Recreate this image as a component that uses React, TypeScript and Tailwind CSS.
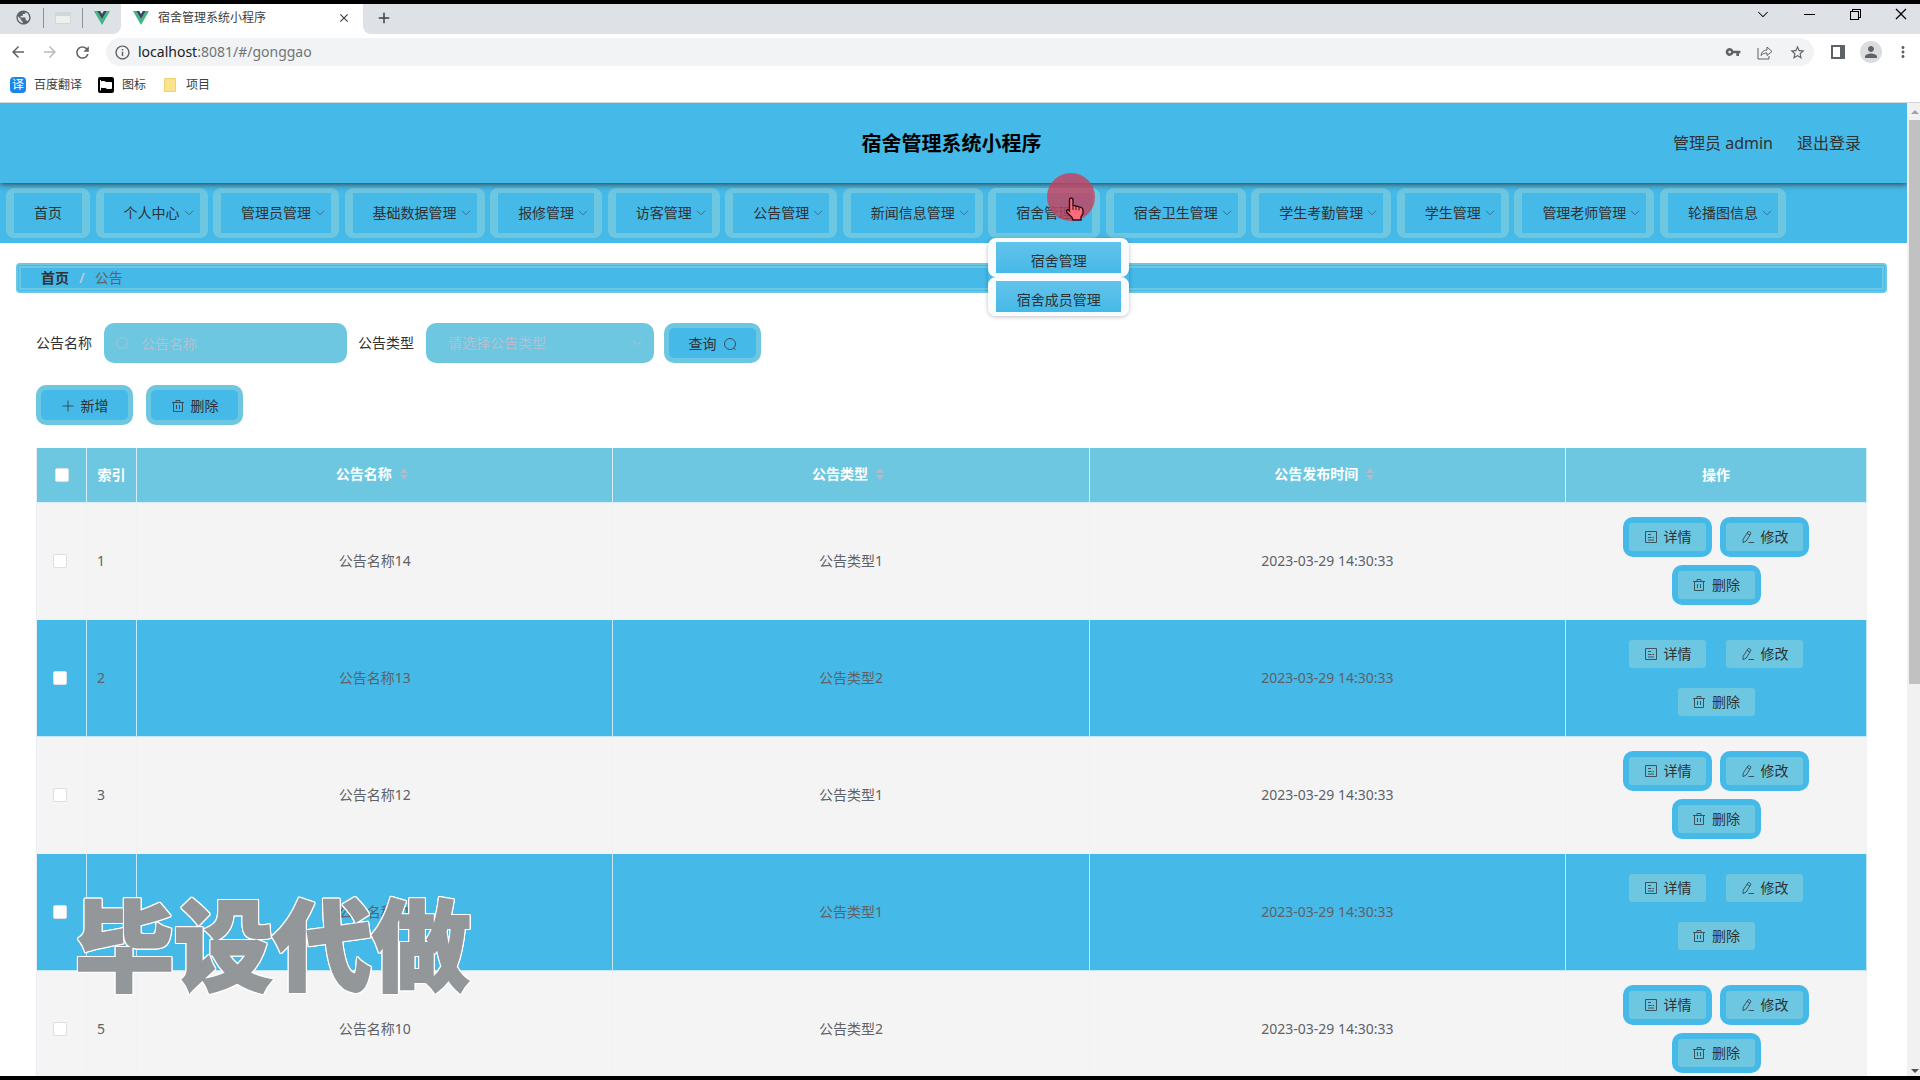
import type { ReactNode } from "react";
import {
  MdAdd,
  MdArrowBack,
  MdArrowForward,
  MdClose,
  MdInfoOutline,
  MdMoreVert,
  MdPerson,
  MdPublic,
  MdRefresh,
  MdStarBorder,
  MdVpnKey,
} from "react-icons/md";
import {
  VscChevronDown,
  VscChromeClose,
  VscChromeMinimize,
  VscChromeRestore,
} from "react-icons/vsc";

const menus = [
  "个人中心",
  "管理员管理",
  "基础数据管理",
  "报修管理",
  "访客管理",
  "公告管理",
  "新闻信息管理",
  "宿舍管理",
  "宿舍卫生管理",
  "学生考勤管理",
  "学生管理",
  "管理老师管理",
  "轮播图信息",
];

const openMenu = "宿舍管理";
const subMenus = ["宿舍管理", "宿舍成员管理"];

const rows = [
  { id: 1, name: "公告名称14", type: "公告类型1", time: "2023-03-29 14:30:33" },
  { id: 2, name: "公告名称13", type: "公告类型2", time: "2023-03-29 14:30:33" },
  { id: 3, name: "公告名称12", type: "公告类型1", time: "2023-03-29 14:30:33" },
  { id: 4, name: "公告名称11", type: "公告类型1", time: "2023-03-29 14:30:33" },
  { id: 5, name: "公告名称10", type: "公告类型2", time: "2023-03-29 14:30:33" },
];

/* ---------- icons ---------- */

function VueLogo() {
  return (
    <svg width="16" height="14" viewBox="0 0 16 14">
      <path d="M0 0h3.2L8 8.3 12.8 0H16L8 14z" fill="#41b883" />
      <path d="M3.2 0h3L8 3.1 9.8 0h3L8 8.3z" fill="#35495e" />
    </svg>
  );
}

function Svg({ children }: { children: ReactNode }) {
  return (
    <svg
      width="14"
      height="14"
      viewBox="0 0 14 14"
      fill="none"
      stroke="currentColor"
      strokeWidth="0.9"
      className="shrink-0 opacity-85"
    >
      {children}
    </svg>
  );
}

const SearchIcon = () => (
  <Svg>
    <circle cx="7" cy="7" r="5.5" />
    <path d="M10.8 11l1.7 1.8" />
  </Svg>
);

const PlusIcon = () => (
  <Svg>
    <path d="M7 1.5v11M1.5 7h11" />
  </Svg>
);

const TrashIcon = () => (
  <Svg>
    <path d="M1 3.5h12M2.5 3.5v9h9v-9M5 3.5v-2h4v2M5.5 6v4M8.5 6v4" />
  </Svg>
);

const DocIcon = () => (
  <Svg>
    <path d="M1.5 1.5h11v11h-11zM4 4.5h3M4 7.5h3.5M8.5 7.5h1.5M4 10h6" />
  </Svg>
);

const EditIcon = () => (
  <Svg>
    <path d="M2.2 9.2L7 1.8c.6-.8 3.4.6 2.8 1.8L5.2 11 2 12.6zM6 3.4l3 1.7M7.5 12.5H13" />
  </Svg>
);

const ArrowDown = () => (
  <svg width="10" height="6" viewBox="0 0 10 6" fill="none" stroke="currentColor">
    <path d="M1 .8l4 4 4-4" />
  </svg>
);

const SortIcon = () => (
  <svg width="8" height="12" viewBox="0 0 8 12" fill="#b0bcca">
    <path d="M4 0l4 5H0zM4 12l4-5H0z" />
  </svg>
);

function Pointer() {
  return (
    <svg width="20" height="24" viewBox="0 0 20 24">
      <path
        d="M6 1c1.200 0 2 .8 2 2v5.500l2.500.3 3 .8 2.500.8c1.200.4 2 1.400 2 2.800v3.300L16 20v3H8l-1-2.500L2 15.500C.8 14 2 12.300 3.500 13L4.500 14V3c0-1.200.5-2 1.500-2z"
        fill="#ff6b78"
        stroke="#2a1018"
        strokeWidth="1.400"
      />
      <path d="M8 8.500V13M11 9.200V13M14 10.200V13.500" stroke="#2a1018" fill="none" />
    </svg>
  );
}

/* ---------- browser ---------- */

function TabStrip() {
  return (
    <div className="flex h-[30px] shrink-0 items-stretch bg-white text-[#5f6368]">
      <div className="flex w-[121px] items-center rounded-br-lg bg-[#dee1e6] pb-[3px]">
        <span className="flex w-[43px] justify-center pl-1">
          <MdPublic size={17} />
        </span>
        <span className="flex h-5 w-10 items-center justify-center border-x border-[#8d9095]">
          <span className="h-3 w-4 border border-t-4 border-[#d0d9d8] bg-[#eef0ef]" />
        </span>
        <span className="flex flex-1 justify-center">
          <VueLogo />
        </span>
      </div>
      <div className="flex w-[242px] items-center gap-[9px] px-3 pb-[3px]">
        <VueLogo />
        <span className="flex-1 text-xs text-[#3c4043]">宿舍管理系统小程序</span>
        <button aria-label="关闭标签页" className="text-[#3c4043]">
          <MdClose size={14} />
        </button>
      </div>
      <div className="flex flex-1 items-center rounded-bl-lg bg-[#dee1e6]">
        <button aria-label="新标签页" className="px-3 pb-[3px] text-[#3c4043]">
          <MdAdd size={18} />
        </button>
        <div className="ml-auto flex items-center gap-[30px] pr-[11px] pb-[10px] text-black">
          <VscChevronDown size={16} />
          <VscChromeMinimize size={16} />
          <VscChromeRestore size={16} />
          <VscChromeClose size={16} />
        </div>
      </div>
    </div>
  );
}

function Toolbar() {
  return (
    <div className="flex h-9 shrink-0 items-center text-[#5f6368]">
      <div className="flex w-[106px] items-center gap-[14px] pl-[9px]">
        <MdArrowBack size={18} />
        <MdArrowForward size={18} className="text-[#b9bbbe]" />
        <MdRefresh size={19} />
      </div>
      <div className="flex h-7 flex-1 items-center rounded-full bg-[#f1f3f4] px-2">
        <MdInfoOutline size={17} />
        <span className="ml-[7px] flex-1 text-sm text-[#70757a]">
          <span className="text-[#202124]">localhost</span>:8081/#/gonggao
        </span>
        <div className="flex items-center gap-4">
          <MdVpnKey size={16} />
          <svg width="16" height="16" viewBox="0 0 16 16" fill="none" stroke="currentColor">
            <path d="M1 4v11h11v-3M4 11.500c.5-3.500 2.500-5.500 6-5.500V3l5 4.500-5 4V9c-2.500 0-4.500.7-6 2.500z" />
          </svg>
          <MdStarBorder size={17} />
        </div>
      </div>
      <div className="flex w-[106px] items-center pl-[17px]">
        <span className="h-[14px] w-[14px] border-2 border-r-[5px] border-[#5f6368]" />
        <span className="ml-[15px] flex h-[22px] w-[22px] items-center justify-center rounded-full bg-[#dadce0]">
          <MdPerson size={18} />
        </span>
        <MdMoreVert size={18} className="ml-3" />
      </div>
    </div>
  );
}

function Bookmarks() {
  return (
    <div className="flex h-[33px] shrink-0 items-center border-b border-[#d5d9dd] px-[10px] pb-[3px] text-xs text-[#3c4043]">
      <a href="#fanyi" className="flex items-center gap-2">
        <span className="flex h-4 w-4 items-center justify-center rounded-sm bg-[#1a86e8] text-white">
          译
        </span>
        百度翻译
      </a>
      <a href="#icons" className="ml-4 flex items-center gap-2">
        <svg width="16" height="16" viewBox="0 0 16 16">
          <rect width="16" height="16" rx="2" />
          <path d="M2.500 3v10.500M3.500 4.500h3l1.500 1h5.500v6H9l-1.500-1h-4z" stroke="#fff" fill="#fff" />
        </svg>
        图标
      </a>
      <a href="#xiangmu" className="ml-[18px] flex items-center gap-[10px]">
        <span className="h-[14px] w-3 rounded-[1px] border border-[#ead377] bg-[#fbe38b]" />
        项目
      </a>
    </div>
  );
}

function Scrollbar() {
  return (
    <div className="flex w-[13px] shrink-0 flex-col items-end bg-[#f1f1f1] pl-[2px]">
      <span className="flex h-[17px] w-full items-center justify-center">
        <svg width="8" height="4" viewBox="0 0 8 4" fill="#a3a3a3">
          <path d="M4 0l4 4H0z" />
        </svg>
      </span>
      <span className="h-[58%] w-full bg-[#c1c1c1]" />
      <span className="mt-auto flex h-[7px] w-full justify-center">
        <svg width="8" height="4" viewBox="0 0 8 4" fill="#505050">
          <path d="M4 4l4-4H0z" />
        </svg>
      </span>
    </div>
  );
}

/* ---------- page ---------- */

function Header() {
  return (
    <header className="relative z-10 grid h-20 grid-cols-3 items-center bg-[#45b9e7] shadow-[0_1px_6px_#333]">
      <h1 className="col-start-2 pt-[2px] pr-1 text-center text-xl font-bold text-black">
        宿舍管理系统小程序
      </h1>
      <div className="flex justify-end gap-6 pr-[46px] text-base text-[#303133]">
        <span>管理员 admin</span>
        <a href="#logout">退出登录</a>
      </div>
    </header>
  );
}

function NavBar() {
  const item =
    "flex h-[50px] items-center rounded-lg border-x-8 border-y-[5px] border-[#6dc7e1] px-5 text-sm whitespace-nowrap text-[#303133]";
  return (
    <nav className="bg-[#45b9e7] pt-[5px] pb-[5px] pl-[6px]">
      <ul className="flex max-w-[1780px] justify-between">
        <li>
          <a href="#home" className={item}>
            首页
          </a>
        </li>
        {menus.map((menu) => (
          <li key={menu} className={menu === openMenu ? "relative z-20" : ""}>
            <a href={`#${menu}`} className={item}>
              {menu}
              <span className="-mr-[14px] ml-1 text-[#3f6f88]">
                <ArrowDown />
              </span>
            </a>
            {menu === openMenu && (
              <>
                <ul className="absolute top-full left-0 w-[141px] rounded-lg shadow-[0_1px_4px_rgba(0,0,0,0.25)]">
                  {subMenus.map((sub) => (
                    <li key={sub}>
                      <a
                        href={`#${sub}`}
                        className="flex h-[39px] items-end justify-center rounded-lg border-x-8 border-y-[4px] border-[#f8fcff] bg-linear-to-b from-[#62c3eb] to-[#45b9e7] pb-[2px] text-sm text-[#303133]"
                      >
                        {sub}
                      </a>
                    </li>
                  ))}
                </ul>
                <span className="absolute -top-[15px] left-[59px] h-12 w-12 rounded-full bg-[#c8405e]/80" />
                <span className="absolute top-[9px] left-[77px]">
                  <Pointer />
                </span>
              </>
            )}
          </li>
        ))}
      </ul>
    </nav>
  );
}

function BlueButton({ children }: { children: ReactNode }) {
  return (
    <button className="flex h-10 w-[97px] items-center justify-center gap-[6px] rounded-[10px] border-[5px] border-[#6dc7e1] bg-[#45b9e7] pt-[2px] text-sm text-[#303133]">
      {children}
    </button>
  );
}

function Filters() {
  return (
    <form className="mt-[30px] flex items-center text-sm text-[#303133]">
      <label htmlFor="name">公告名称</label>
      <div className="relative ml-3 text-[#b4c0d0]">
        <span className="absolute top-[13px] left-[11px]">
          <SearchIcon />
        </span>
        <input
          id="name"
          placeholder="公告名称"
          className="h-10 w-[243px] rounded-[10px] bg-[#6dc7e1] pl-[37px] placeholder:text-[#b4c0d0]"
        />
      </div>
      <label htmlFor="type" className="ml-[11px]">
        公告类型
      </label>
      <div className="relative ml-3 text-[#b4c0d0]">
        <select id="type" className="h-10 w-[228px] appearance-none rounded-[10px] bg-[#6dc7e1] pl-[22px]">
          <option>请选择公告类型</option>
        </select>
        <span className="absolute top-[17px] right-3">
          <ArrowDown />
        </span>
      </div>
      <div className="ml-[10px]">
        <BlueButton>
          查询
          <SearchIcon />
        </BlueButton>
      </div>
    </form>
  );
}

function ActionButton({ icon, label }: { icon: ReactNode; label: string }) {
  return (
    <button className="h-10 w-[89px] rounded-[10px] bg-[#45b9e7] p-[6px]">
      <span className="flex h-7 items-center justify-center gap-[6px] rounded-[3px] bg-[#6dc7e1] text-sm text-[#303133]">
        {icon}
        {label}
      </span>
    </button>
  );
}

const check =
  "block h-[14px] w-[14px] appearance-none rounded-[2px] border border-[#dcdfe6] bg-white";

function NoticeTable() {
  const head = "h-[55px] border-r border-b border-[#d5eef8]";
  return (
    <table className="mt-[23px] w-full table-fixed border-separate border-spacing-0 border-l border-[#ebeef5] text-sm">
      <colgroup>
        <col className="w-[50px]" />
        <col className="w-[50px]" />
        <col />
        <col />
        <col />
        <col className="w-[301px]" />
      </colgroup>
      <thead>
        <tr className="bg-[#6dc7e1] text-white">
          <th className={`${head} pl-[18px]`}>
            <input type="checkbox" aria-label="全选" className={check} />
          </th>
          <th className={head}>索引</th>
          {["公告名称", "公告类型", "公告发布时间"].map((title) => (
            <th key={title} className={head}>
              <span className="flex items-center justify-center gap-2 pr-[6px] pb-[2px]">
                {title}
                <SortIcon />
              </span>
            </th>
          ))}
          <th className={head}>操作</th>
        </tr>
      </thead>
      <tbody>
        {rows.map((row) => {
          const blue = row.id % 2 === 0;
          const cell = blue
            ? "h-[117px] border-r border-b border-[#c4e8f7]"
            : "h-[117px] border-r border-b border-[#f0f1f4]";
          return (
            <tr
              key={row.id}
              className={
                blue
                  ? "bg-[#45b9e7] text-center text-[#606266]"
                  : "bg-[#f4f4f5] text-center text-[#606266]"
              }
            >
              <td className={`${cell} pl-4`}>
                <input type="checkbox" aria-label={`选择${row.name}`} className={check} />
              </td>
              <td className={`${cell} pl-[10px] text-left`}>{row.id}</td>
              <td className={cell}>{row.name}</td>
              <td className={cell}>{row.type}</td>
              <td className={cell}>{row.time}</td>
              <td className={cell}>
                <div className="flex flex-wrap justify-center gap-2 px-[50px]">
                  <ActionButton icon={<DocIcon />} label="详情" />
                  <ActionButton icon={<EditIcon />} label="修改" />
                  <ActionButton icon={<TrashIcon />} label="删除" />
                </div>
              </td>
            </tr>
          );
        })}
      </tbody>
    </table>
  );
}

export default function App() {
  return (
    <div
      className="relative flex h-screen flex-col overflow-hidden border-y-4 border-black bg-white"
      style={{ fontFamily: '"Noto Sans", "Noto Sans CJK SC", sans-serif' }}
    >
      <TabStrip />
      <Toolbar />
      <Bookmarks />
      <div className="flex min-h-0 flex-1">
        <div className="min-w-0 flex-1 overflow-hidden">
          <Header />
          <NavBar />
          <main>
            <div className="mt-5 mr-5 ml-4 rounded-[4px] border-2 border-[#6dc7e1] bg-[#45b9e7] p-px">
              <div className="flex h-6 items-center gap-[10px] border-2 border-[#6dc7e1] pl-5 text-sm">
                <a href="#home" className="font-bold text-[#303133]">
                  首页
                </a>
                <span className="font-bold text-[#b5c6dc]">/</span>
                <span className="text-[#606266]">公告</span>
              </div>
            </div>
            <div className="pr-10 pl-9">
              <Filters />
              <div className="mt-[22px] flex gap-[13px]">
                <BlueButton>
                  <PlusIcon />
                  新增
                </BlueButton>
                <BlueButton>
                  <TrashIcon />
                  删除
                </BlueButton>
              </div>
              <NoticeTable />
            </div>
          </main>
        </div>
        <Scrollbar />
      </div>
      <div
        className="pointer-events-none absolute bottom-[86px] left-[75px] text-[99px] leading-none font-black text-[#939799]"
        style={{
          fontFamily: '"Noto Sans CJK SC", sans-serif',
          WebkitTextStroke: "2px #939799",
          filter:
            "drop-shadow(1px 0 0 #fff) drop-shadow(-1px 0 0 #fff) drop-shadow(0 1px 0 #fff) drop-shadow(0 -1px 0 #fff)",
        }}
      >
        毕设代做
      </div>
    </div>
  );
}
